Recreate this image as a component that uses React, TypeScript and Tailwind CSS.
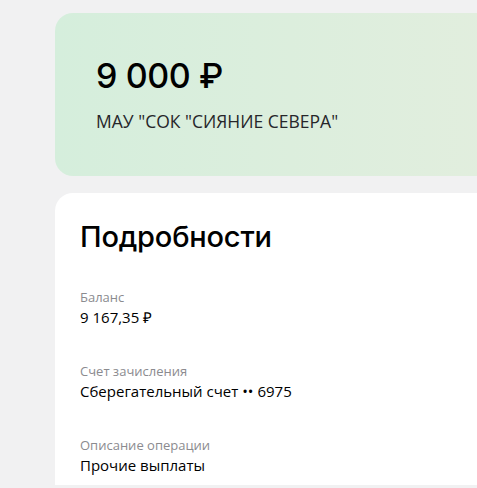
export default function App() {
  const rows = [
    { label: 'Баланс', value: '9 167,35 ₽' },
    { label: 'Счет зачисления', value: 'Сберегательный счет •• 6975' },
    { label: 'Описание операции', value: 'Прочие выплаты' },
  ]
  return (
    <div className="h-[488px] w-[477px] overflow-hidden bg-[#f1f1f2] pl-[55px] pt-[13px] font-['Open_Sans',sans-serif] text-[#1f1f22]">
      <div className="w-[440px] h-[163px] rounded-l-[18px] bg-gradient-to-r from-[#d5eedc] to-[#e2eede] pl-[41px] pt-[43px]">
        <div className="font-['Inter',sans-serif] text-[34px] font-medium leading-[40px] tracking-[-0.4px] text-black">9 000 ₽</div>
        <div className="mt-[14px] text-[17.5px] leading-[22px] text-[#26262a]">МАУ "СОК "СИЯНИЕ СЕВЕРА"</div>
      </div>
      <div className="mt-[17px] w-[440px] h-[292px] rounded-tl-[18px] bg-white pl-[25px] pt-[27px]">
        <h2 className="font-['Inter',sans-serif] text-[29px] font-medium leading-[34px] tracking-[-0.2px] text-black">Подробности</h2>
        <div className="mt-[34px] flex flex-col gap-[34px]">
          {rows.map((r) => (
            <div key={r.label} className="flex flex-col">
              <span className="text-[13px] leading-[18px] text-[#8b8b8f]">{r.label}</span>
              <span className="text-[15px] leading-[22px] text-black">{r.value}</span>
            </div>
          ))}
        </div>
      </div>
    </div>
  )
}
